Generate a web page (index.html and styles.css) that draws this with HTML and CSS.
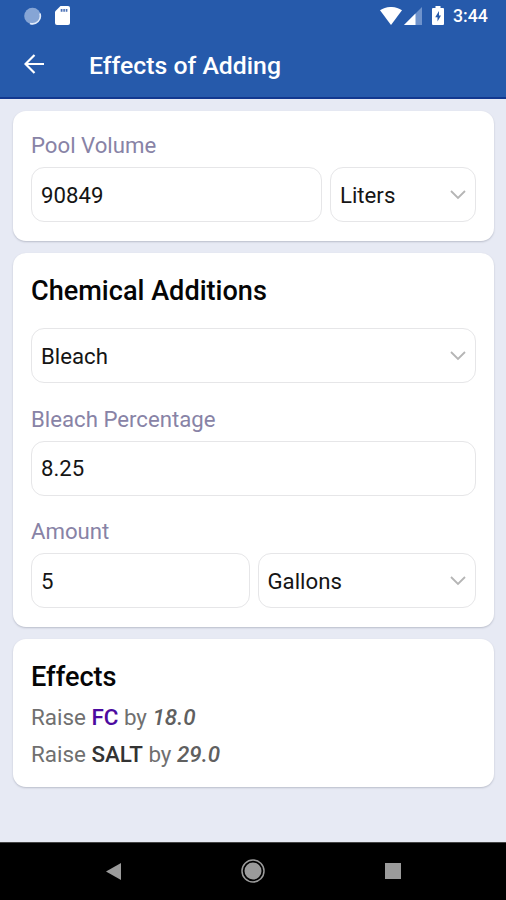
FILE: index.html
```html
<!DOCTYPE html>
<html lang="en">
<head>
<meta charset="utf-8">
<title>Effects of Adding</title>
<link rel="stylesheet" href="styles.css">
</head>
<body>
<div class="screen">
  <header class="header">
    <div class="status">
      <svg class="status-sync" width="18" height="18" viewBox="0 0 18 18"><circle cx="8.500" cy="9" r="8.300" fill="#86a5d5"/><path d="M15.900 6.500A7.800 7.800 0 0 1 6 16.400" fill="none" stroke="#e1ebfa" stroke-width="1.600"/></svg>
      <svg class="status-card" width="15" height="19" viewBox="0 0 15 19"><path d="M5.500 0H13a2 2 0 0 1 2 2v15a2 2 0 0 1-2 2H2a2 2 0 0 1-2-2V5.500z" fill="#fff"/><path d="M5.700 3h1.800v2.800H5.700zM8.300 3h1.600v2.800H8.300zM10.700 3h1.700v2.800h-1.700z" fill="#4a70b5"/></svg>
      <span class="spacer"></span>
      <svg class="status-wifi" width="22" height="18" viewBox="0 0 22 18"><path d="M0 3.200C6.500-1.100 15.500-1.100 22 3.200L11 18z" fill="#fff"/></svg>
      <svg class="status-signal" width="18" height="18" viewBox="0 0 18 18"><path d="M18 0v18H0z" fill="#6f93cc"/><path d="M11.500 6.500V18H0z" fill="#fff"/></svg>
      <svg class="status-battery" width="12" height="19" viewBox="0 0 12 19"><path d="M3.500 0h5v2H11q1 0 1 1v15q0 1-1 1H1q-1 0-1-1V3q0-1 1-1h2.500z" fill="#fff"/><path d="M7 5 3.200 11.200h2.300v4.300l3.500-6H7z" fill="#265aab"/></svg>
      <span class="clock">3:44</span>
    </div>
    <div class="toolbar">
      <svg class="back" width="20" height="20" viewBox="0 0 20 20" fill="none" stroke="#fff" stroke-width="2.200"><path d="M20 10H1.700M10.500 1 1.500 10l9 9"/></svg>
      <h1 class="title">Effects of Adding</h1>
    </div>
  </header>
  <main class="content">
    <section class="card card-volume">
      <div class="label">Pool Volume</div>
      <div class="row">
        <div class="field field-volume">90849</div>
        <div class="field field-unit"><span>Liters</span><svg class="chevron" width="16" height="10" viewBox="0 0 16 10"><path d="M1 1l7 7 7-7"/></svg></div>
      </div>
    </section>
    <section class="card card-chemical">
      <h2 class="heading heading-chemical">Chemical Additions</h2>
      <div class="field"><span>Bleach</span><svg class="chevron" width="16" height="10" viewBox="0 0 16 10"><path d="M1 1l7 7 7-7"/></svg></div>
      <div class="label label-percentage">Bleach Percentage</div>
      <div class="field field-raised">8.25</div>
      <div class="label label-amount">Amount</div>
      <div class="row">
        <div class="field half">5</div>
        <div class="field half"><span>Gallons</span><svg class="chevron" width="16" height="10" viewBox="0 0 16 10"><path d="M1 1l7 7 7-7"/></svg></div>
      </div>
    </section>
    <section class="card card-effects">
      <h2 class="heading heading-effects">Effects</h2>
      <p class="effect">Raise <b class="fc">FC</b> by <b class="amount">18.0</b></p>
      <p class="effect">Raise <b class="salt">SALT</b> by <b class="amount">29.0</b></p>
    </section>
  </main>
  <nav class="navbar">
    <svg width="15" height="17" viewBox="0 0 15 17"><path d="M15 0v17L0 8.500z" fill="#9b9b9b"/></svg>
    <svg width="24" height="24" viewBox="0 0 24 24"><circle cx="12" cy="12" r="11" fill="none" stroke="#9b9b9b" stroke-width="1.500"/><circle cx="12" cy="12" r="8.500" fill="#9b9b9b"/></svg>
    <svg width="16" height="16" viewBox="0 0 16 16"><path d="M0 0h16v16H0z" fill="#9b9b9b"/></svg>
  </nav>
</div>
</body>
</html>
```

FILE: styles.css
```css
* { box-sizing: border-box; }
body { margin: 0; font-family: Roboto, sans-serif; }
h1, h2, p { margin: 0; }
svg { display: block; flex: none; }

.screen { width: 506px; height: 900px; display: flex; flex-direction: column; background: #e7eaf4; overflow: hidden; }

.header { height: 99px; flex: none; background: #265aab; border-bottom: 2px solid #12388f; color: #fff; }
.status { height: 31px; padding: 0 19px 0 24px; display: flex; align-items: center; }
.status-card { margin-left: 13px; }
.spacer { flex: 1; }
.status-signal { margin-left: 2px; }
.status-battery { margin-left: 10px; }
.clock { margin-left: 9px; width: 34px; font-size: 17.7px; font-weight: 500; line-height: 31px; padding-top: 1px; white-space: nowrap; }
.toolbar { height: 65px; padding: 0 24px; display: flex; align-items: center; }
.title { margin-left: 45px; font-size: 24.8px; font-weight: 500; line-height: 32px; padding-top: 4px; white-space: nowrap; }

.content { flex: 1; padding: 12px 12px 0 13px; display: flex; flex-direction: column; gap: 12px; }
.card { flex: none; padding: 0 18px; background: #fff; border-radius: 13px; box-shadow: 0 1px 2px #b9bdca; }
.card-volume { height: 130px; padding-top: 19px; }
.card-chemical { height: 374px; padding-top: 21px; }
.card-effects { height: 148px; padding-top: 21px; }

.label { height: 30px; margin-bottom: 7px; font-size: 22.2px; line-height: 30px; color: #8883a6; }
.label-percentage { margin-top: 21px; }
.label-amount { margin-top: 20px; }
.row { display: flex; gap: 8px; }
.field { height: 55px; padding: 0 9px; display: flex; align-items: center; justify-content: space-between; border: 1px solid #e6e6e8; border-radius: 13px; font-size: 22.2px; color: #151515; }
.field-raised { padding-bottom: 1px; }
.field-volume { width: 291px; }
.field-unit { flex: 1; }
.half { flex: 1; }
.chevron { fill: none; stroke: #b5b5b5; stroke-width: 1.8; }

.heading { font-size: 27.1px; font-weight: 500; line-height: 35px; color: #050505; }
.heading-chemical { margin-bottom: 19px; }
.heading-effects { margin-bottom: 4px; }
.effect { font-size: 22.4px; line-height: 37px; color: #707070; }
.effect b { font-weight: 500; }
.effect .fc { color: #4c0aa0; }
.effect .salt { color: #333; }
.effect .amount { color: #606060; font-style: italic; }

.navbar { height: 58px; flex: none; padding: 0 105px 1px 106px; background: #000; border-top: 1px solid #444; display: flex; align-items: center; justify-content: space-between; }
```
